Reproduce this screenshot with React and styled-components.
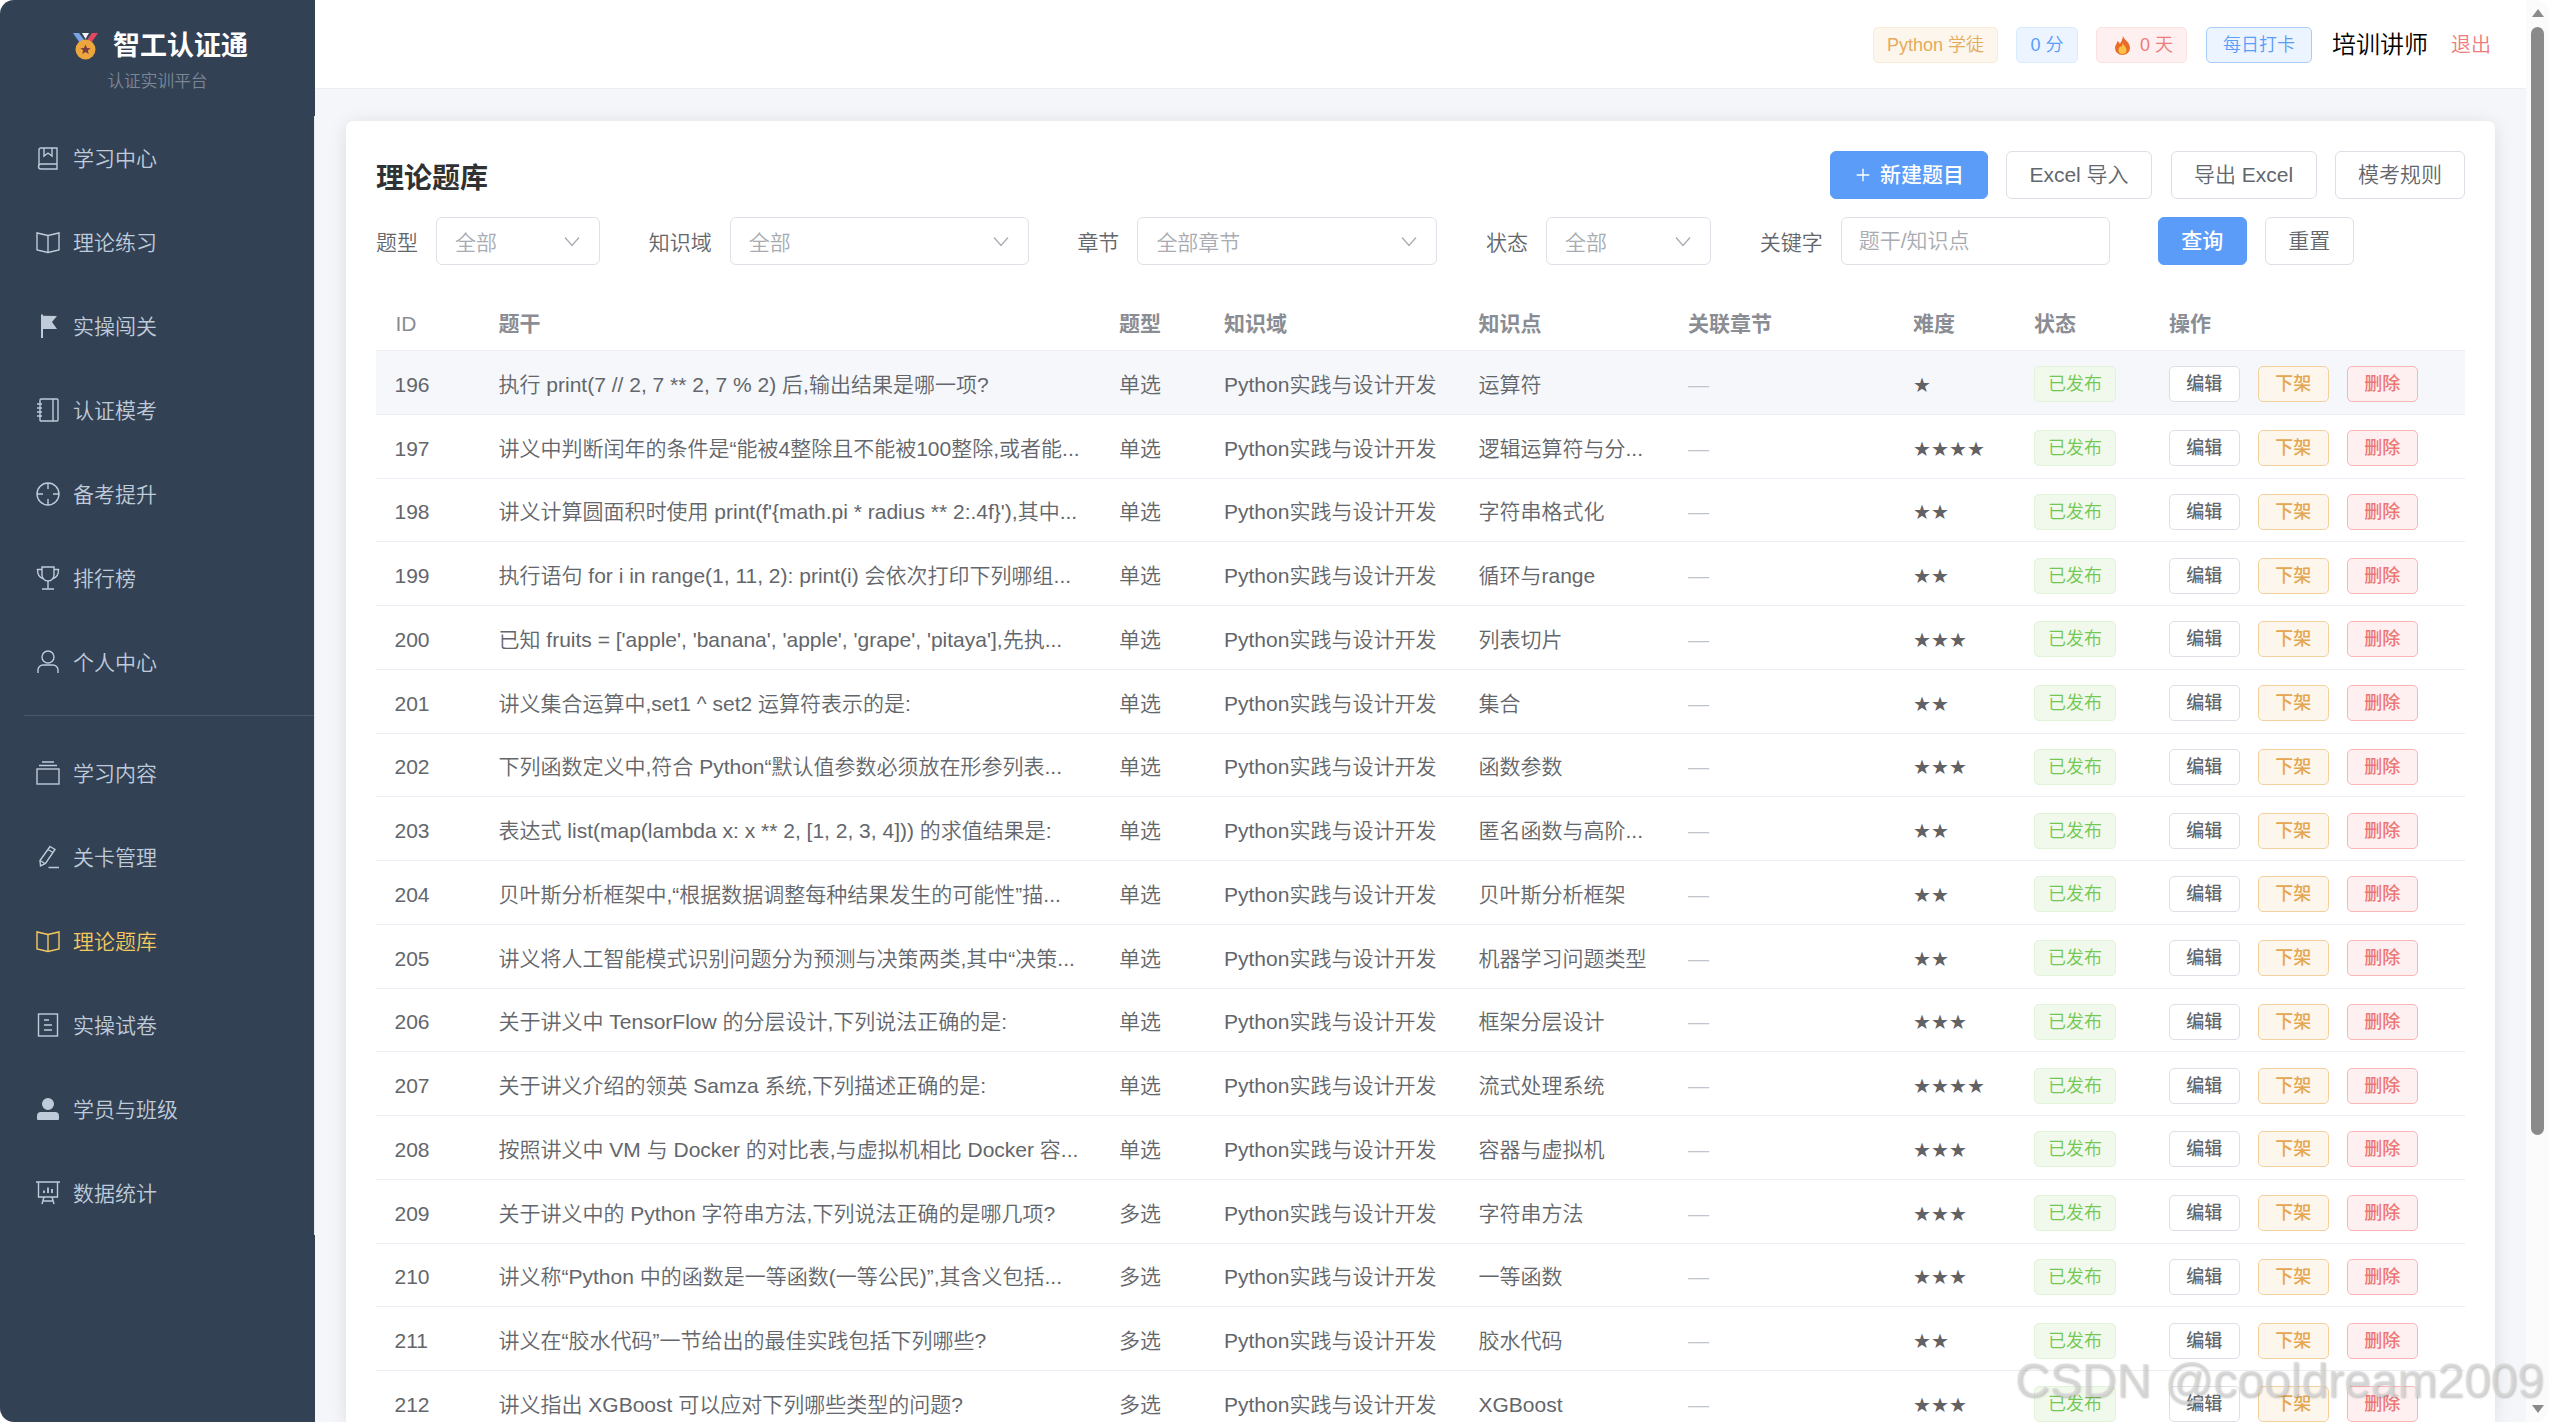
import React from 'react';
import styled, { createGlobalStyle } from 'styled-components';
import { Plus } from 'lucide-react';

const GlobalStyle = createGlobalStyle`
  * {
    box-sizing: border-box;
  }

  html, body {
    margin: 0;
    height: 100%;
    background: #fff;
    overflow: hidden;
  }

  body {
    font-family: "Liberation Sans", "Noto Sans CJK SC", sans-serif;
    font-size: 21px;
    font-weight: 350;
    line-height: 30px;
    color: #63666b;
  }
`;

const Shell = styled.div`
  position: relative;
  display: flex;
  height: 100vh;
  overflow: hidden;
  border-radius: 14px;
  background: #fff;
`;

const Sidebar = styled.aside`
  flex: 0 0 315px;
  background: #334155;
`;

const Logo = styled.div`
  height: 116px;
  padding-top: 29px;
  text-align: center;
`;

const LogoTitle = styled.div`
  display: flex;
  justify-content: center;
  align-items: center;
  gap: 15px;
  height: 34px;
  padding-left: 6px;
  color: #fff;
  font-size: 27px;
  font-weight: 700;
`;

const LogoSub = styled.div`
  margin-top: 7px;
  color: #7c8796;
  font-size: 16.7px;
  line-height: 24px;
`;

const Menu = styled.nav`
  border-right: 1px solid #e6e8ee;
`;

const MenuItem = styled.a`
  display: flex;
  align-items: center;
  gap: 13px;
  height: 84px;
  padding-left: 36px;
  color: ${(p) => (p.$active ? '#f4c95d' : '#bfcbd9')};
`;

const MenuLabel = styled.span`
  padding-top: 2px;
`;

const MenuDivider = styled.div`
  height: 1px;
  margin: 11px 0 15px 24px;
  background: #4a5667;
`;

const Icon = styled.svg`
  flex: none;
  width: 24px;
  height: 24px;
  fill: none;
  stroke: currentColor;
  stroke-width: 1.4;
`;

const Content = styled.div`
  flex: 1;
  min-width: 0;
  display: flex;
  flex-direction: column;
  background: #f4f6fa;
`;

const TopBar = styled.header`
  flex: none;
  display: flex;
  justify-content: flex-end;
  align-items: center;
  gap: 18px;
  height: 89px;
  padding: 2px 35px 0 0;
  background: #fff;
  border-bottom: 1px solid #ebeef5;
`;

const toneStyles = {
  warning: 'background:#fdf6ec;border-color:#faecd8;color:#e5ab5c;',
  info: 'background:#ecf5ff;border-color:#d9ecff;color:#5a9cf8;',
  danger: 'background:#fef0f0;border-color:#fde2e2;color:#ee7b7b;',
  success: 'background:#f0f9eb;border-color:#e1f3d8;color:#74c752;',
};

const Tag = styled.span`
  display: inline-flex;
  justify-content: center;
  align-items: center;
  min-width: 62px;
  height: 36px;
  padding: 0 13px;
  border: 1px solid;
  border-radius: 5px;
  font-size: 18px;
  white-space: nowrap;
  ${(p) => toneStyles[p.$tone]}
`;

const FlameIcon = styled.svg`
  flex: none;
  width: 15px;
  height: 19px;
  margin: 0 10px 0 5px;
`;

const CheckIn = styled.button`
  height: 36px;
  width: 106px;
  padding: 0;
  margin-left: 1px;
  border: 1px solid #a8cdfb;
  border-radius: 5px;
  background: #ecf5ff;
  color: #5a9cf8;
  font: inherit;
  font-size: 18px;
`;

const UserName = styled.span`
  margin-left: 2px;
  color: #000;
  font-size: 24px;
`;

const Logout = styled.a`
  margin-left: 5px;
  color: #ee7b7b;
  font-size: 20px;
`;

const Main = styled.main`
  flex: 1;
  min-height: 0;
  padding: 32px 31px 0;
`;

const Card = styled.section`
  height: 100%;
  padding: 30px 30px 0;
  overflow: hidden;
  border-radius: 7px 7px 0 0;
  background: #fff;
  box-shadow: 0 2px 18px rgba(0, 0, 0, 0.1);
  margin-bottom: -40px;
`;

const CardHead = styled.div`
  display: flex;
  justify-content: space-between;
  align-items: center;
  height: 48px;
`;

const Title = styled.h2`
  margin: 0;
  padding-top: 7px;
  color: #303133;
  font-size: 28px;
  font-weight: 700;
  line-height: 41px;
`;

const Actions = styled.div`
  display: flex;
  gap: 18.5px;
`;

const Button = styled.button`
  display: inline-flex;
  justify-content: center;
  align-items: center;
  gap: 7px;
  width: ${(p) => p.$width}px;
  height: 48px;
  padding: 0;
  border: 1px solid ${(p) => (p.$primary ? '#5a9cf8' : '#dcdfe6')};
  border-radius: 6px;
  background: ${(p) => (p.$primary ? '#5a9cf8' : '#fff')};
  color: ${(p) => (p.$primary ? '#fff' : '#63666b')};
  font: inherit;
  font-weight: ${(p) => (p.$primary ? 500 : 350)};
  white-space: nowrap;
`;

const Filters = styled.div`
  display: flex;
  align-items: center;
  margin-top: 18px;
`;

const FilterLabel = styled.label`
  margin-right: 18px;
  padding-top: 3px;
  white-space: nowrap;
`;

const Select = styled.div`
  display: flex;
  justify-content: space-between;
  align-items: center;
  width: ${(p) => p.$width}px;
  height: 48px;
  margin-right: 48.7px;
  padding: 3px 19px 0 18px;
  border: 1.5px solid #dfe1e8;
  border-radius: 6px;
  color: #a8abb2;
`;

const Chevron = styled.svg`
  width: 16px;
  height: 16px;
  margin-top: -3px;
  fill: none;
  stroke: #a8abb2;
  stroke-width: 1.3;
`;

const KeywordInput = styled.input`
  width: 269px;
  height: 48px;
  margin-right: 48px;
  padding: 0 17px;
  border: 1.5px solid #dfe1e8;
  border-radius: 6px;
  color: #63666b;
  font: inherit;
  outline: none;

  &::placeholder {
    color: #a8abb2;
  }
`;

const FilterButtons = styled.div`
  display: flex;
  gap: 18px;
`;

const Table = styled.div`
  margin-top: 30px;
`;

const columns = '103px 620.5px 105px 254.5px 209.5px 225px 121px 135px 315.5px';

const HeadRow = styled.div`
  display: grid;
  grid-template-columns: ${columns};
  align-items: center;
  height: 56px;
  padding-top: 2px;
  border-bottom: 1px solid #ebeef5;
  color: #8a8d93;
`;

const HeadCell = styled.div`
  padding: 0 19.5px;
  font-weight: ${(p) => (p.$light ? 350 : 700)};
`;

const Row = styled.div`
  display: grid;
  grid-template-columns: ${columns};
  align-items: center;
  height: 63.75px;
  padding-top: 2px;
  border-bottom: 1px solid #ebeef5;
  background: ${(p) => (p.$hover ? '#f5f7fb' : '#fff')};
`;

const Cell = styled.div`
  min-width: 0;
  padding: 3px 19.5px 0;
  white-space: nowrap;
  overflow: hidden;
`;

const IdCell = styled(Cell)`
  padding-left: 18.5px;
`;

const TagCell = styled.div`
  display: flex;
  padding: 2px 19.5px 0;
`;

const Dash = styled.span`
  color: #c0c4cc;
`;

const Stars = styled.span`
  font-family: "DejaVu Sans", sans-serif;
  font-size: 20px;
  color: #606266;
`;

const OpCell = styled.div`
  display: flex;
  gap: 18.5px;
  padding: 2px 19.5px 0;
`;

const opStyles = {
  plain: 'background:#fff;border-color:#dcdfe6;color:#63666b;',
  warning: 'background:#fdf6ec;border-color:#f3d19e;color:#e5a650;',
  danger: 'background:#fef0f0;border-color:#fab6b6;color:#ee7676;',
};

const OpButton = styled.button`
  width: 70.5px;
  height: 36px;
  padding: 0;
  border: 1px solid;
  border-radius: 5px;
  font: inherit;
  font-size: 18px;
  font-weight: 500;
  ${(p) => opStyles[p.$tone]}
`;

const ScrollRail = styled.div`
  flex: 0 0 23px;
  display: flex;
  flex-direction: column;
  align-items: center;
  padding: 9px 5px;
  background: #fbfbfb;
`;

const ArrowUp = styled.div`
  flex: none;
  width: 0;
  height: 0;
  border-left: 6px solid transparent;
  border-right: 6px solid transparent;
  border-bottom: 8px solid #8a8a8a;
`;

const ArrowDown = styled(ArrowUp)`
  margin-top: auto;
  border-bottom: none;
  border-top: 8px solid #8a8a8a;
`;

const Thumb = styled.div`
  flex: none;
  width: 13px;
  height: 1108px;
  margin-top: 10px;
  border-radius: 7px;
  background: #8a8a8a;
`;

const Watermark = styled.div`
  position: absolute;
  right: 5px;
  bottom: 14px;
  color: rgba(218, 218, 218, 0.7);
  font-family: "Liberation Sans", sans-serif;
  font-size: 48px;
  font-weight: 400;
  line-height: 54px;
  white-space: nowrap;
  text-shadow: 1px 1px 2px rgba(110, 110, 110, 0.4);
  pointer-events: none;
`;

function Medal() {
  return (
    <svg width="25" height="27" viewBox="0 0 25 27">
      <polygon points="0,0 6,0 14,11 9,13" fill="#7aa3e6" />
      <polygon points="25,0 19,0 11,11 16,13" fill="#e2485f" />
      <polygon points="9,0 16,0 12.5,6" fill="#f1f1f6" />
      <circle cx="12.5" cy="16.5" r="10" fill="#eba63d" />
      <polygon
        points="12.5,11.5 14,15 17.6,15.2 14.8,17.5 15.8,21 12.5,19 9.2,21 10.2,17.5 7.4,15.2 11,15"
        fill="#7a3d42"
      />
    </svg>
  );
}

function Flame() {
  return (
    <FlameIcon viewBox="0 0 15 19">
      <path d="M8 0c1 4 7 6 7 12a7.500 7 0 0 1-15 0c0-3 2-4 2.500-7 1 .6 2 2 2.200 3C6.500 6 7.500 3 8 0z" fill="#ea6a2a" />
      <path d="M7.800 7c.5 2.500 3.700 3.800 3.700 7a4 4 0 0 1-8 0c0-2 1.200-2.500 1.700-4 .6.500 1 1 1.100 1.600C6.700 10.500 7.500 9 7.800 7z" fill="#f9c445" />
    </FlameIcon>
  );
}

const iconPaths = {
  bookmark: (
    <>
      <path d="M3 20V4a2 2 0 0 1 2-2h16v16H5a2 2 0 0 0 0 5h16v-5" />
      <path d="M8 2v8l4-3 4 3V2" />
    </>
  ),
  reading: (
    <>
      <path d="M12 5.500 1 3v17l11 2.500L23 20V3z" />
      <path d="M12 5.500v17" />
    </>
  ),
  flag: <path d="M5 0.500h2v1.200L21 2l-5 6 5 7H7v9H5z" fill="currentColor" stroke="none" />,
  notebook: (
    <>
      <rect x="4" y="1" width="18" height="22" rx="1" />
      <path d="M17 1v22M1 6h5M1 10h5M1 14h5M1 18h5" />
    </>
  ),
  aim: (
    <>
      <circle cx="12" cy="12" r="11" />
      <path d="M12 1v6M12 17v6M1 12h6M17 12h6" />
    </>
  ),
  trophy: (
    <>
      <path d="M6 1h12v8a6 6 0 0 1-12 0z" />
      <path d="M6 3.500H1.500c0 5 1.500 8 5.500 9M18 3.500h4.500c0 5-1.500 8-5.500 9M12 15v8M6 23h12" />
    </>
  ),
  user: (
    <>
      <circle cx="12" cy="7" r="6" />
      <path d="M2 23v-3a5 5 0 0 1 5-5h10a5 5 0 0 1 5 5v3" />
    </>
  ),
  box: (
    <>
      <rect x="1" y="8" width="22" height="15" />
      <path d="M3 4.500h18M6 1h12" />
    </>
  ),
  pen: (
    <>
      <path d="M14 1.500l5 3-9.500 14-5 2.500-.5-5.500z" />
      <path d="M12 4.500l5 3M4 15.500l5 3M12.500 22.500H23" />
    </>
  ),
  doc: (
    <>
      <rect x="2.500" y="1" width="19" height="22" />
      <path d="M8 7h5M8 12h8M8 17h8" />
    </>
  ),
  team: (
    <path
      d="M12 1a6 6 0 1 1 0 12 6 6 0 0 1 0-12zM5 15h14a4 4 0 0 1 4 4v3a1 1 0 0 1-1 1H2a1 1 0 0 1-1-1v-3a4 4 0 0 1 4-4z"
      fill="currentColor"
      stroke="none"
    />
  ),
  board: (
    <>
      <path d="M0 1h24M2.500 1v15h19V1M8 16l-2 7M16 16l2 7M7 20h10" />
      <path d="M8 12V9.500M12 12V6.500M16 12V8" strokeWidth="1.800" />
    </>
  ),
};

const topMenu = [
  ['bookmark', '学习中心'],
  ['reading', '理论练习'],
  ['flag', '实操闯关'],
  ['notebook', '认证模考'],
  ['aim', '备考提升'],
  ['trophy', '排行榜'],
  ['user', '个人中心'],
];

const adminMenu = [
  ['box', '学习内容'],
  ['pen', '关卡管理'],
  ['reading', '理论题库', true],
  ['doc', '实操试卷'],
  ['team', '学员与班级'],
  ['board', '数据统计'],
];

const domain = 'Python实践与设计开发';

const questions = [
  [196, '执行 print(7 // 2, 7 ** 2, 7 % 2) 后,输出结果是哪一项?', '单选', '运算符', 1],
  [197, '讲义中判断闰年的条件是“能被4整除且不能被100整除,或者能...', '单选', '逻辑运算符与分...', 4],
  [198, "讲义计算圆面积时使用 print(f'{math.pi * radius ** 2:.4f}'),其中...", '单选', '字符串格式化', 2],
  [199, '执行语句 for i in range(1, 11, 2): print(i) 会依次打印下列哪组...', '单选', '循环与range', 2],
  [200, "已知 fruits = ['apple', 'banana', 'apple', 'grape', 'pitaya'],先执...", '单选', '列表切片', 3],
  [201, '讲义集合运算中,set1 ^ set2 运算符表示的是:', '单选', '集合', 2],
  [202, '下列函数定义中,符合 Python“默认值参数必须放在形参列表...', '单选', '函数参数', 3],
  [203, '表达式 list(map(lambda x: x ** 2, [1, 2, 3, 4])) 的求值结果是:', '单选', '匿名函数与高阶...', 2],
  [204, '贝叶斯分析框架中,“根据数据调整每种结果发生的可能性”描...', '单选', '贝叶斯分析框架', 2],
  [205, '讲义将人工智能模式识别问题分为预测与决策两类,其中“决策...', '单选', '机器学习问题类型', 2],
  [206, '关于讲义中 TensorFlow 的分层设计,下列说法正确的是:', '单选', '框架分层设计', 3],
  [207, '关于讲义介绍的领英 Samza 系统,下列描述正确的是:', '单选', '流式处理系统', 4],
  [208, '按照讲义中 VM 与 Docker 的对比表,与虚拟机相比 Docker 容...', '单选', '容器与虚拟机', 3],
  [209, '关于讲义中的 Python 字符串方法,下列说法正确的是哪几项?', '多选', '字符串方法', 3],
  [210, '讲义称“Python 中的函数是一等函数(一等公民)”,其含义包括...', '多选', '一等函数', 3],
  [211, '讲义在“胶水代码”一节给出的最佳实践包括下列哪些?', '多选', '胶水代码', 2],
  [212, '讲义指出 XGBoost 可以应对下列哪些类型的问题?', '多选', 'XGBoost', 3],
];

const headers = ['ID', '题干', '题型', '知识域', '知识点', '关联章节', '难度', '状态', '操作'];

function NavIcon({ name }) {
  return <Icon viewBox="0 0 24 24">{iconPaths[name]}</Icon>;
}

function FilterSelect({ width, children }) {
  return (
    <Select $width={width}>
      {children}
      <Chevron viewBox="0 0 16 16">
        <path d="M1 4.500l7 8 7-8" />
      </Chevron>
    </Select>
  );
}

function App() {
  return (
    <Shell>
      <GlobalStyle />
      <Sidebar>
        <Logo>
          <LogoTitle>
            <Medal />
            智工认证通
          </LogoTitle>
          <LogoSub>认证实训平台</LogoSub>
        </Logo>
        <Menu>
          {topMenu.map(([icon, label]) => (
            <MenuItem key={label}>
              <NavIcon name={icon} />
              <MenuLabel>{label}</MenuLabel>
            </MenuItem>
          ))}
          <MenuDivider />
          {adminMenu.map(([icon, label, active]) => (
            <MenuItem key={label} $active={active}>
              <NavIcon name={icon} />
              <MenuLabel>{label}</MenuLabel>
            </MenuItem>
          ))}
        </Menu>
      </Sidebar>
      <Content>
        <TopBar>
          <Tag $tone="warning">Python 学徒</Tag>
          <Tag $tone="info">0 分</Tag>
          <Tag $tone="danger">
            <Flame />
            0 天
          </Tag>
          <CheckIn>每日打卡</CheckIn>
          <UserName>培训讲师</UserName>
          <Logout>退出</Logout>
        </TopBar>
        <Main>
          <Card>
            <CardHead>
              <Title>理论题库</Title>
              <Actions>
                <Button $primary $width={158}>
                  <Plus size={20} strokeWidth={1.6} />
                  新建题目
                </Button>
                <Button $width={146}>Excel 导入</Button>
                <Button $width={146}>导出 Excel</Button>
                <Button $width={130}>模考规则</Button>
              </Actions>
            </CardHead>
            <Filters>
              <FilterLabel>题型</FilterLabel>
              <FilterSelect width={164}>全部</FilterSelect>
              <FilterLabel>知识域</FilterLabel>
              <FilterSelect width={299}>全部</FilterSelect>
              <FilterLabel>章节</FilterLabel>
              <FilterSelect width={300}>全部章节</FilterSelect>
              <FilterLabel>状态</FilterLabel>
              <FilterSelect width={165}>全部</FilterSelect>
              <FilterLabel>关键字</FilterLabel>
              <KeywordInput placeholder="题干/知识点" readOnly />
              <FilterButtons>
                <Button $primary $width={89}>查询</Button>
                <Button $width={89}>重置</Button>
              </FilterButtons>
            </Filters>
            <Table>
              <HeadRow>
                {headers.map((h) => (
                  <HeadCell key={h} $light={h === 'ID'}>{h}</HeadCell>
                ))}
              </HeadRow>
              {questions.map(([id, stem, type, point, level], i) => (
                <Row key={id} $hover={i === 0}>
                  <IdCell>{id}</IdCell>
                  <Cell>{stem}</Cell>
                  <Cell>{type}</Cell>
                  <Cell>{domain}</Cell>
                  <Cell>{point}</Cell>
                  <Cell><Dash>—</Dash></Cell>
                  <Cell><Stars>{'★'.repeat(level)}</Stars></Cell>
                  <TagCell><Tag $tone="success">已发布</Tag></TagCell>
                  <OpCell>
                    <OpButton $tone="plain">编辑</OpButton>
                    <OpButton $tone="warning">下架</OpButton>
                    <OpButton $tone="danger">删除</OpButton>
                  </OpCell>
                </Row>
              ))}
            </Table>
          </Card>
        </Main>
      </Content>
      <ScrollRail>
        <ArrowUp />
        <Thumb />
        <ArrowDown />
      </ScrollRail>
      <Watermark>CSDN @cooldream2009</Watermark>
    </Shell>
  );
}

export default App;
